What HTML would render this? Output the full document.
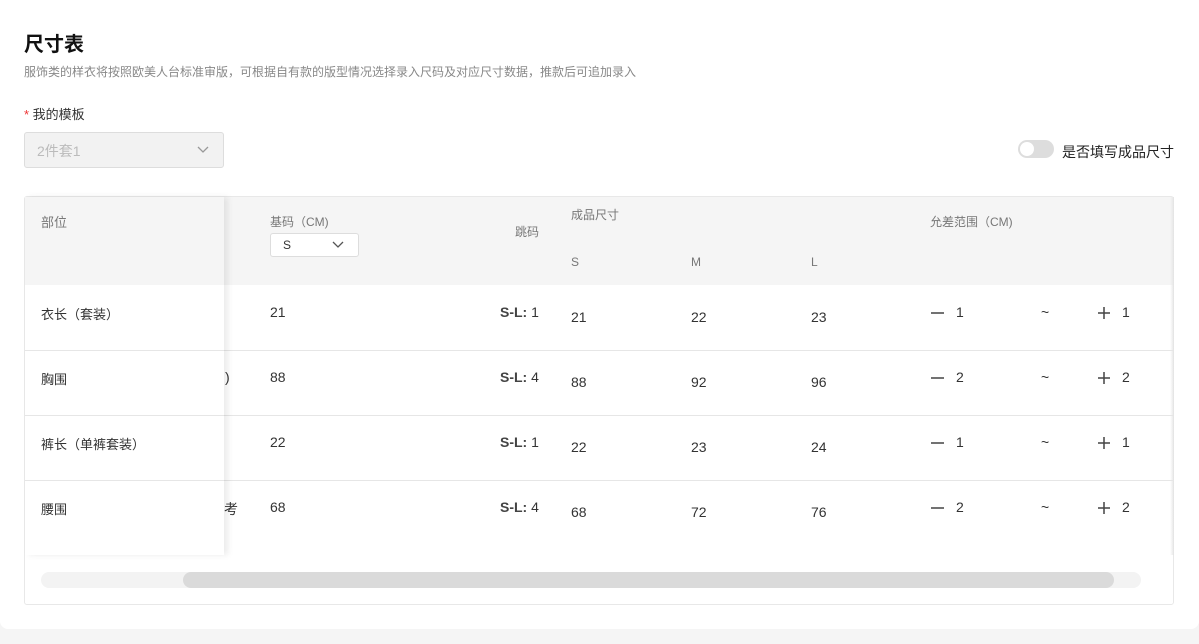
<!DOCTYPE html>
<html><head><meta charset="utf-8"><style>
*{margin:0;padding:0;box-sizing:border-box}
body{width:1199px;height:644px;background:#f5f5f5;font-family:"Liberation Sans","Noto Sans CJK SC",sans-serif;position:relative;overflow:hidden;color:#333}
.a{position:absolute;white-space:nowrap}
.card{position:absolute;left:0;top:0;width:1199px;height:629px;background:#fff;border-radius:0 0 8px 8px}
.box{position:absolute;left:24px;top:196px;width:1150px;height:409px;border:1px solid #e8e8e8;border-radius:3px;background:#fff}
.hd{position:absolute;left:25px;top:197px;width:1148px;height:88px;background:#f5f5f5}
.line{position:absolute;left:25px;width:1148px;height:1px;background:#e6e6e6}
.fix{position:absolute;left:25px;top:197px;width:199px;height:358px;box-shadow:4px 0 6px rgba(0,0,0,.08)}
.t{font-size:14px;color:#333}
.h{font-size:12px;color:#777}
b{font-weight:bold;color:#444}
</style></head><body>
<div class="card"></div>
<div class="a" style="left:24px;top:28px;font-size:20px;font-weight:bold;color:#111">尺寸表</div>
<div class="a" style="left:24px;top:63px;font-size:12px;color:#888">服饰类的样衣将按照欧美人台标准审版，可根据自有款的版型情况选择录入尺码及对应尺寸数据，推款后可追加录入</div>
<div class="a" style="left:24px;top:104px;font-size:13px;color:#333"><span style="color:#e33">*</span> 我的模板</div>
<div class="a" style="left:24px;top:132px;width:200px;height:36px;background:#f2f2f2;border:1px solid #ddd;border-radius:3px"></div>
<div class="a" style="left:37px;top:141px;font-size:14px;color:#bbb">2件套1</div>
<svg class="a" style="left:196px;top:145px" width="14" height="10"><path d="M2 2l5 5 5-5" fill="none" stroke="#999" stroke-width="1.3"/></svg>
<div class="a" style="left:1018px;top:140px;width:36px;height:18px;border-radius:9px;background:#ddd"></div>
<div class="a" style="left:1020px;top:142px;width:14px;height:14px;border-radius:7px;background:#fff"></div>
<div class="a" style="left:1062px;top:142px;font-size:14px;color:#222">是否填写成品尺寸</div>
<div class="box"></div>
<div class="hd"></div>
<div class="line" style="top:350px"></div><div class="line" style="top:415px"></div><div class="line" style="top:480px"></div>
<div class="a h" style="left:270px;top:213px">基码（CM)</div>
<div class="a" style="left:270px;top:233px;width:89px;height:24px;border:1px solid #ddd;border-radius:3px;background:#fff"></div>
<div class="a" style="left:283px;top:238px;font-size:12px">S</div>
<svg class="a" style="left:331px;top:240px" width="14" height="10"><path d="M2 2l5 5 5-5" fill="none" stroke="#555" stroke-width="1.3"/></svg>
<div class="a h" style="left:515px;top:223px">跳码</div>
<div class="a h" style="left:571px;top:206px">成品尺寸</div>
<div class="a h" style="left:571px;top:255px">S</div>
<div class="a h" style="left:691px;top:255px">M</div>
<div class="a h" style="left:811px;top:255px">L</div>
<div class="a h" style="left:930px;top:213px">允差范围（CM)</div>

<div class="a t" style="left:270px;top:304px">21</div><div class="a t" style="left:500px;top:304px"><b>S-L:</b> 1</div>
<div class="a t" style="left:571px;top:309px">21</div><div class="a t" style="left:691px;top:309px">22</div><div class="a t" style="left:811px;top:309px">23</div>
<div class="a t" style="left:956px;top:304px">1</div><div class="a t" style="left:1041px;top:304px">~</div><div class="a t" style="left:1122px;top:304px">1</div>
<div class="a t" style="left:225px;top:369px">)</div>
<div class="a t" style="left:270px;top:369px">88</div><div class="a t" style="left:500px;top:369px"><b>S-L:</b> 4</div>
<div class="a t" style="left:571px;top:374px">88</div><div class="a t" style="left:691px;top:374px">92</div><div class="a t" style="left:811px;top:374px">96</div>
<div class="a t" style="left:956px;top:369px">2</div><div class="a t" style="left:1041px;top:369px">~</div><div class="a t" style="left:1122px;top:369px">2</div>
<div class="a t" style="left:270px;top:434px">22</div><div class="a t" style="left:500px;top:434px"><b>S-L:</b> 1</div>
<div class="a t" style="left:571px;top:439px">22</div><div class="a t" style="left:691px;top:439px">23</div><div class="a t" style="left:811px;top:439px">24</div>
<div class="a t" style="left:956px;top:434px">1</div><div class="a t" style="left:1041px;top:434px">~</div><div class="a t" style="left:1122px;top:434px">1</div>
<div class="a t" style="left:224px;top:499px">考</div>
<div class="a t" style="left:270px;top:499px">68</div><div class="a t" style="left:500px;top:499px"><b>S-L:</b> 4</div>
<div class="a t" style="left:571px;top:504px">68</div><div class="a t" style="left:691px;top:504px">72</div><div class="a t" style="left:811px;top:504px">76</div>
<div class="a t" style="left:956px;top:499px">2</div><div class="a t" style="left:1041px;top:499px">~</div><div class="a t" style="left:1122px;top:499px">2</div>
<svg class="a" style="left:0;top:0" width="1199" height="644">
<g stroke="#444" stroke-width="1.5">
<path d="M931 313h13M931 378h13M931 443h13M931 508h13"/>
<path d="M1098 313h12M1104 307v12M1098 378h12M1104 372v12M1098 443h12M1104 437v12M1098 508h12M1104 502v12"/>
</g></svg>
<div class="fix">
<div style="position:absolute;left:0;top:0;width:199px;height:88px;background:#f5f5f5"></div>
<div style="position:absolute;left:0;top:88px;width:199px;height:270px;background:#fff"></div>
<div style="position:absolute;left:0;top:153px;width:199px;height:1px;background:#e6e6e6"></div>
<div style="position:absolute;left:0;top:218px;width:199px;height:1px;background:#e6e6e6"></div>
<div style="position:absolute;left:0;top:283px;width:199px;height:1px;background:#e6e6e6"></div>
<div class="a h" style="left:16px;top:15px;font-size:13px">部位</div>
<div class="a t" style="left:16px;top:107px;font-size:13px">衣长（套装）</div>
<div class="a t" style="left:16px;top:172px;font-size:13px">胸围</div>
<div class="a t" style="left:16px;top:237px;font-size:13px">裤长（单裤套装）</div>
<div class="a t" style="left:16px;top:302px;font-size:13px">腰围</div>
</div>
<div class="a" style="left:1170px;top:197px;width:4px;height:358px;background:linear-gradient(90deg,#fff0,#e5e5e5)"></div>
<div class="a" style="left:41px;top:572px;width:1100px;height:16px;border-radius:8px;background:#f3f3f3"></div>
<div class="a" style="left:183px;top:572px;width:931px;height:16px;border-radius:8px;background:#dadada"></div>
</body></html>
